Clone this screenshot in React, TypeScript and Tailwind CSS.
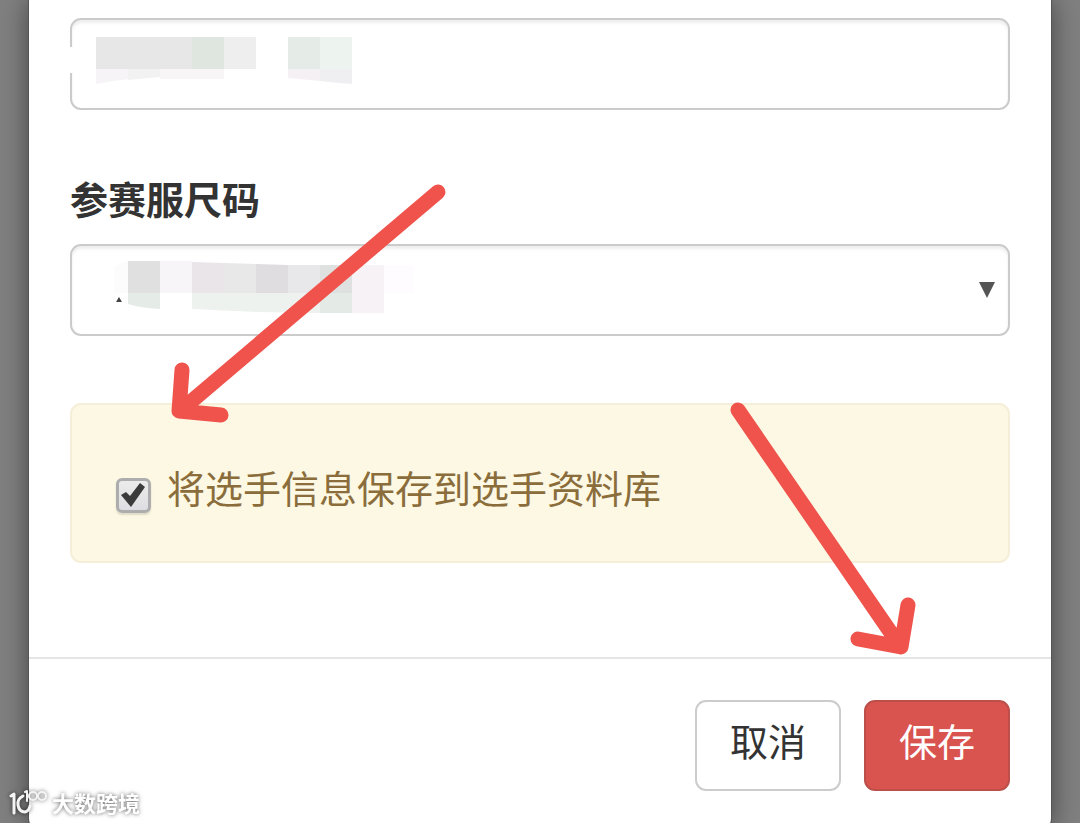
import { useState } from "react";

const fieldClass =
  "block h-[92px] w-full appearance-none rounded-[11px] border-2 border-[#cbcbcb] bg-white px-8 text-[38px] text-[#555] shadow-[inset_0_3px_3px_rgba(0,0,0,0.07)] outline-none";

const buttonClass =
  "h-[91px] w-[146px] rounded-[11px] border-2 pb-3 text-[38px] leading-[54px]";

function NameMask() {
  return (
    <svg className="pointer-events-none absolute top-0 -left-1" width="300" height="92" aria-hidden="true">
      <rect x="0" y="29" width="9" height="26" fill="#fff" />
      <rect x="30" y="19" width="96" height="32" fill="#e7e7e7" />
      <rect x="126" y="19" width="32" height="32" fill="#dfe5df" />
      <rect x="158" y="19" width="32" height="32" fill="#eeeeee" />
      <path d="M30 51H94V59Q60 60 30 66Z" fill="#f6f4f6" />
      <path d="M62 51H94V59L62 62Z" fill="#f2f2f2" />
      <rect x="94" y="51" width="64" height="10" fill="#f8f5f7" />
      <rect x="222" y="19" width="32" height="32" fill="#e5ebe6" />
      <rect x="254" y="19" width="32" height="32" fill="#edf3ef" />
      <path d="M222 51H254V63L222 60Z" fill="#f5f0f4" />
      <path d="M254 51H286V66Q270 65 254 63Z" fill="#efeef1" />
    </svg>
  );
}

function SizeMask() {
  return (
    <svg className="pointer-events-none absolute top-0 left-0" width="400" height="92" aria-hidden="true">
      <path d="M46 58L49 53L52 58Z" fill="#444" />
      <path d="M44 22L58 17V49H44Z" fill="#fdfcfd" />
      <rect x="58" y="17" width="32" height="32" fill="#e0e0e0" />
      <path d="M58 49H90V65Q70 64 58 60Z" fill="#e5ebe6" />
      <rect x="90" y="17" width="32" height="32" fill="#f8f5f8" />
      <path d="M122 18L154 19V49H122Z" fill="#e9e5e9" />
      <path d="M154 19L186 20V49H154Z" fill="#e8e8e8" />
      <path d="M186 20L218 21V49H186Z" fill="#dfdde0" />
      <rect x="218" y="21" width="32" height="28" fill="#e8e7e9" />
      <rect x="250" y="21" width="32" height="28" fill="#dfe1e1" />
      <path d="M122 49H250V69L186 68L122 65Z" fill="#eef2ef" />
      <rect x="250" y="49" width="32" height="20" fill="#e4ebe6" />
      <rect x="282" y="21" width="32" height="48" fill="#f6f2f6" />
      <rect x="314" y="21" width="30" height="28" fill="#fefcfe" />
    </svg>
  );
}

function Watermark() {
  return (
    <div className="absolute bottom-1.5 left-2 flex items-center gap-1 drop-shadow-[0_0_2px_rgba(0,0,0,0.6)]">
      <svg width="40" height="30" viewBox="0 0 40 30" fill="none" stroke="#f4f4f4" strokeLinecap="round" strokeLinejoin="round" aria-hidden="true">
        <path d="M3 9L6 7V26" strokeWidth="3" />
        <path d="M15 9Q9 12 10 18Q11 25 17 25Q21 24 22 19" strokeWidth="3" />
        <path d="M17 5L19 4V14" strokeWidth="2" />
        <circle cx="25" cy="9" r="4" strokeWidth="2" />
        <circle cx="34" cy="9" r="4" strokeWidth="2" />
      </svg>
      <span className="text-[22px] leading-7 font-bold text-white">大数跨境</span>
    </div>
  );
}

export default function App() {
  const [saved, setSaved] = useState(true);

  return (
    <div className="h-screen overflow-hidden bg-[#808080] font-['Noto_Sans_CJK_SC',sans-serif]">
      <main className="relative mx-[29px] rounded-b-[14px] bg-white shadow-[0_0_0_1px_#555,0_0_28px_rgba(0,0,0,0.5)]">
        <form onSubmit={(e) => e.preventDefault()}>
          <div className="px-[41px] pt-[18px] pb-[94px]">
            <div className="relative">
              <input type="text" aria-label="姓名" className={fieldClass} />
              <NameMask />
            </div>

            <label htmlFor="size" className="mt-[61px] mb-[19px] block text-[38px] leading-[54px] font-bold text-[#333]">
              参赛服尺码
            </label>
            <div className="relative">
              <select id="size" className={fieldClass}>
                <option value=""></option>
              </select>
              <SizeMask />
              <svg className="pointer-events-none absolute top-[38px] right-[15px]" width="16" height="16" aria-hidden="true">
                <path d="M0 0H16L8 16Z" fill="#555" />
              </svg>
            </div>

            <div className="mt-[67px] rounded-[11px] border-2 border-[#f5eed8] bg-[#fcf8e3] px-11 pt-[55px] pb-[47px]">
              <label className="flex items-center gap-4 text-[38px] leading-[54px] text-[#8a6d3b]">
                <span className="relative mt-4 size-[35px] shrink-0">
                  <input
                    type="checkbox"
                    checked={saved}
                    onChange={(e) => setSaved(e.target.checked)}
                    className="block size-[35px] appearance-none rounded-md border-3 border-[#adadad] bg-linear-to-b from-[#ececec] to-[#dedee2] shadow-[0_2px_2px_rgba(0,0,0,0.12)]"
                  />
                  {saved && (
                    <svg className="pointer-events-none absolute inset-0" width="35" height="35" aria-hidden="true">
                      <path d="M5 17L10 14L14 18L24 5L29 9L15 29Z" fill="#3b3b3b" />
                    </svg>
                  )}
                </span>
                <span>将选手信息保存到选手资料库</span>
              </label>
            </div>
          </div>

          <div className="flex justify-end gap-[23px] border-t-2 border-[#e5e5e5] px-[41px] pt-[41px] pb-[41px]">
            <button type="button" className={`${buttonClass} border-[#ccc] bg-white text-[#333]`}>
              取消
            </button>
            <button type="submit" className={`${buttonClass} border-[#bd4f4b] bg-[#d9534f] text-white`}>
              保存
            </button>
          </div>
        </form>

        <svg
          className="pointer-events-none absolute top-[180px] left-[131px]"
          width="300"
          height="250"
          viewBox="160 180 300 250"
          fill="none"
          stroke="#ef534c"
          strokeWidth="15"
          strokeLinecap="round"
          strokeLinejoin="round"
          aria-hidden="true"
        >
          <path d="M438 192L180 411M182 370L179 411L221 415" />
        </svg>
        <svg
          className="pointer-events-none absolute top-[390px] right-[121px]"
          width="210"
          height="280"
          viewBox="720 390 210 280"
          fill="none"
          stroke="#ef534c"
          strokeWidth="15"
          strokeLinecap="round"
          strokeLinejoin="round"
          aria-hidden="true"
        >
          <path d="M738 410L900 646M908 605L901 647L858 639" />
        </svg>
      </main>
      <Watermark />
    </div>
  );
}
